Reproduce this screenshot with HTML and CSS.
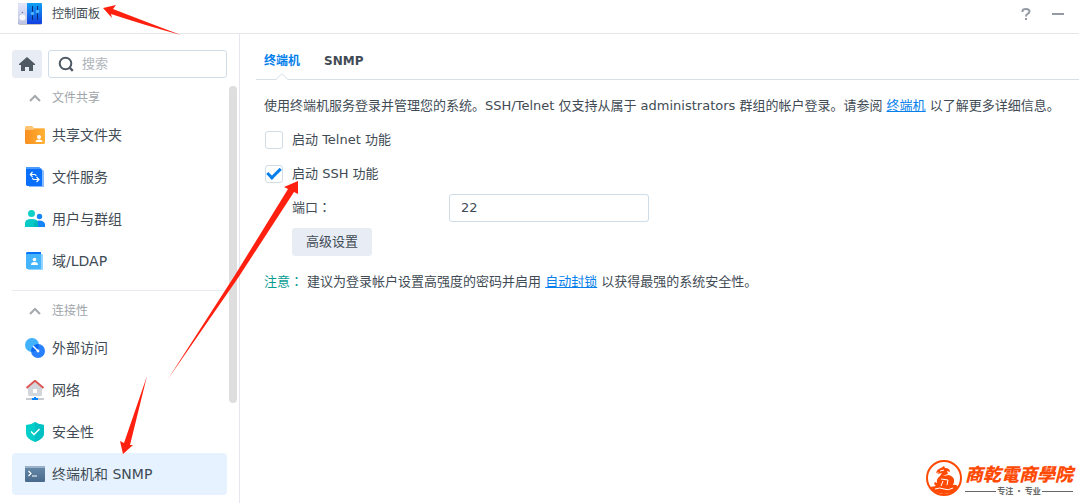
FILE: index.html
```html
<!DOCTYPE html>
<html lang="zh-CN">

<head>
  <meta charset="UTF-8">
  <meta name="viewport" content="width=device-width, initial-scale=1.0">
  <title>控制面板</title>
  <link rel="stylesheet" href="styles.css">
</head>

<body>
  <header class="titlebar">
    <svg class="app-icon" width="24" height="24" viewBox="0 0 24 24">
      <defs>
        <linearGradient id="panelBlue" x1="0" y1="0" x2="0" y2="1">
          <stop offset="0" stop-color="#10a0f5"/>
          <stop offset="1" stop-color="#1440e0"/>
        </linearGradient>
        <linearGradient id="panelGrey" x1="0" y1="0" x2="0" y2="1">
          <stop offset="0" stop-color="#e4e7fa"/>
          <stop offset="1" stop-color="#bcc2e2"/>
        </linearGradient>
      </defs>
      <rect x="0" y="3" width="24" height="20" rx="2" fill="#c4c4c8"/>
      <rect x="0" y="1" width="24" height="21" rx="1" fill="url(#panelBlue)"/>
      <path d="M1 1h8v21H1a1 1 0 0 1-1-1V2a1 1 0 0 1 1-1z" fill="url(#panelGrey)"/>
      <circle cx="4.500" cy="15.500" r="3" fill="#f8f8fc"/>
      <circle cx="4.500" cy="10.500" r=".7" fill="#6d7291"/>
      <path d="M14.500 4v14M19.500 4v14" stroke="#0a2c78" stroke-width="1"/>
      <circle cx="14.500" cy="11.500" r="1.700" fill="#4db4ff"/>
      <circle cx="19.500" cy="9.500" r="1.700" fill="#4db4ff"/>
    </svg>
    <h1 class="title">控制面板</h1>
    <div class="window-tools">
      <button type="button" class="tool-btn" aria-label="帮助">
        <svg width="16" height="16" viewBox="0 0 16 16" fill="none" stroke="#959ba3" stroke-width="2">
          <path d="M4.500 6V5Q4.500 3 8 3T11.500 5.500Q11.500 7 9.500 7.800Q8 8.500 8 10.500M8 12v2"/>
        </svg>
      </button>
      <button type="button" class="tool-btn" aria-label="最小化">
        <svg width="16" height="16" viewBox="0 0 16 16"><path d="M2 7h12v2H2z" fill="#959ba3"/></svg>
      </button>
    </div>
  </header>

  <div class="layout">
    <aside class="sidebar">
      <div class="search-row">
        <button type="button" class="home-btn" aria-label="主页">
          <svg width="16" height="16" viewBox="0 0 16 16">
            <path d="M8 1L0 8v1h2v6h4v-4h4v4h4V9h2V8z" fill="#505a64"/>
          </svg>
        </button>
        <label class="search">
          <svg width="16" height="16" viewBox="0 0 16 16" fill="none" stroke="#505a64" stroke-width="2">
            <circle cx="7.500" cy="7.500" r="5.800"/>
            <path d="M11.500 11.500l3.300 3.300" stroke-width="2.400"/>
          </svg>
          <input type="search" placeholder="搜索" aria-label="搜索">
        </label>
      </div>

      <nav class="menu">
        <button type="button" class="group-title">
          <svg width="12" height="8" viewBox="0 0 12 8" fill="none" stroke="#a4a8ad" stroke-width="2"><path d="M1 7l5-5 5 5"/></svg>
          文件共享
        </button>
        <a href="#share" class="menu-item">
          <svg width="20" height="20" viewBox="0 0 20 20">
            <defs>
              <linearGradient id="folder" x1="0" y1="0" x2="1" y2="0">
                <stop offset="0" stop-color="#f98f20"/>
                <stop offset="1" stop-color="#ffb234"/>
              </linearGradient>
            </defs>
            <path d="M1 1h6l2 2h10l1 1v7H0V2z" fill="#fec474"/>
            <path d="M0 5h8l2-1h9l1 1v13l-1 1H1l-1-1z" fill="url(#folder)"/>
            <circle cx="14" cy="12" r="2" fill="#fff"/>
            <path d="M10.500 17q0-2.500 3.500-2.500t3.500 2.500z" fill="#fff"/>
          </svg>
          共享文件夹
        </a>
        <a href="#file-service" class="menu-item">
          <svg width="20" height="20" viewBox="0 0 20 20">
            <path d="M4 0h10l5 4v16H4z" fill="#8abcfd"/>
            <path d="M1 0h12.500L17 3v16H2l-1-1z" fill="#0a70fb"/>
            <path d="M1 0h12.500L17 2H1z" fill="#499bff"/>
            <path d="M7.500 5L5.300 7.500 7.500 10M5.500 7.500h4q1.500 0 1.500 1.500M7.500 11q0 1.500 1.500 1.500h4.500M11.500 10l2.500 2.500-2.500 2.500" fill="none" stroke="#fff" stroke-width="1.200"/>
          </svg>
          文件服务
        </a>
        <a href="#users" class="menu-item">
          <svg width="20" height="20" viewBox="0 0 20 20">
            <circle cx="14.500" cy="7.500" r="2.700" fill="#1684fb"/>
            <path d="M10 18v-3q0-3.500 4.500-3.500T20 15v3z" fill="#1684fb"/>
            <circle cx="6.500" cy="4.500" r="3.500" fill="#10d0c5"/>
            <path d="M0 18v-4q0-4 6.500-4t6.500 4v4z" fill="#08c9c5"/>
            <path d="M9 18v-3q0-2 2.500-3.500Q13 13 13 14v4z" fill="#00b7ba"/>
          </svg>
          用户与群组
        </a>
        <a href="#domain" class="menu-item">
          <svg width="20" height="20" viewBox="0 0 20 20">
            <rect x="3" y="3" width="15" height="16" rx="1" fill="#91d4ff"/>
            <path d="M2 1h14v5H1V2z" fill="#0872f7"/>
            <path d="M1 3h15v15H2l-1-1z" fill="#45b4fc"/>
            <circle cx="9.500" cy="8.500" r="1.800" fill="#fff"/>
            <path d="M6 14q0-3 3.500-3t3.500 3z" fill="#fff"/>
          </svg>
          域/LDAP
        </a>

        <hr class="divider">

        <button type="button" class="group-title">
          <svg width="12" height="8" viewBox="0 0 12 8" fill="none" stroke="#a4a8ad" stroke-width="2"><path d="M1 7l5-5 5 5"/></svg>
          连接性
        </button>
        <a href="#external" class="menu-item">
          <svg width="20" height="20" viewBox="0 0 20 20">
            <circle cx="7" cy="7" r="7" fill="#43b2fd"/>
            <circle cx="13" cy="13" r="7" fill="#287fff"/>
            <path d="M6.200 13.800A7 7 0 0 1 13.800 6.200 7 7 0 0 1 6.200 13.800z" fill="#0869f1"/>
            <path d="M8 8l5 5" stroke="#fff" stroke-width="1.500"/>
            <circle cx="13" cy="13" r="1.400" fill="#fff"/>
          </svg>
          外部访问
        </a>
        <a href="#network" class="menu-item">
          <svg width="20" height="20" viewBox="0 0 20 20">
            <path d="M3 8l7-6 7 6v7l-1 1H4l-1-1z" fill="#d2d5da"/>
            <rect x="8" y="9" width="4" height="4" fill="#fff"/>
            <path d="M1.500 8L10 .800 18.500 8" fill="none" stroke="#d95454" stroke-width="2"/>
            <path d="M1 18h18v2H1z" fill="#c6cbd1"/>
            <path d="M9 17h2v1h2v2H7v-2h2z" fill="#0e83ff"/>
          </svg>
          网络
        </a>
        <a href="#security" class="menu-item">
          <svg width="20" height="20" viewBox="0 0 20 20">
            <path d="M10 0q4 3 9 3v8q0 6-9 9-9-3-9-9V3q5 0 9-3z" fill="#00cfc9"/>
            <path d="M10 0q4 3 9 3v8q0 6-9 9z" fill="#00c0c3"/>
            <path d="M6 9.500l3 3 5.500-5.500" fill="none" stroke="#fff" stroke-width="1.500"/>
          </svg>
          安全性
        </a>
        <a href="#terminal" class="menu-item active">
          <svg width="20" height="20" viewBox="0 0 20 20">
            <defs>
              <linearGradient id="term" x1="0" y1="0" x2="0" y2="1">
                <stop offset="0" stop-color="#688baa"/>
                <stop offset="1" stop-color="#48698b"/>
              </linearGradient>
            </defs>
            <rect y="2" width="20" height="16" rx="1" fill="url(#term)"/>
            <path d="M1 2h18l1 1v1H0V3z" fill="#9cb2c8"/>
            <path d="M3.500 7l2.500 2.500L3.500 12M7 12h5" fill="none" stroke="#fff" stroke-width="1.200"/>
          </svg>
          终端机和 SNMP
        </a>
      </nav>
      <div class="scroll-thumb"></div>
    </aside>

    <main class="content">
      <div class="tabs">
        <a href="#terminal" class="tab active">终端机
          <svg class="notch" width="12" height="7" viewBox="0 0 12 7"><path d="M0 6.500L6 .700l6 5.800V7H0z" fill="#fff"/><path d="M0 6.500L6 .700l6 5.800" fill="none" stroke="#d5e0e9"/></svg>
        </a>
        <a href="#snmp" class="tab">SNMP</a>
      </div>

      <form class="settings">
        <p class="row">使用终端机服务登录并管理您的系统。SSH/Telnet 仅支持从属于 administrators 群组的帐户登录。请参阅&nbsp;<a href="#help">终端机</a>&nbsp;以了解更多详细信息。</p>
        <div class="row">
          <input type="checkbox" id="telnet" class="check">
          <label for="telnet">启动 Telnet 功能</label>
        </div>
        <div class="row">
          <input type="checkbox" id="ssh" class="check" checked>
          <label for="ssh">启动 SSH 功能</label>
        </div>
        <div class="row indent">
          <label for="port" class="port-label">端口<span lang="zh-TW" class="colon">：</span></label>
          <input type="text" id="port" class="port" value="22">
        </div>
        <div class="row indent">
          <button type="button" class="btn">高级设置</button>
        </div>
        <p class="row note"><span class="note-label">注意<span lang="zh-TW" class="colon">：</span></span>建议为登录帐户设置高强度的密码并启用&nbsp;<a href="#autoblock">自动封锁</a>&nbsp;以获得最强的系统安全性。</p>
      </form>
    </main>
  </div>

  <!-- arrows pointing out the steps -->
  <svg class="arrows" width="320" height="470" viewBox="0 0 320 470" fill="#ff2010">
    <path d="M103 8l13-3-3 4q36 14 68 26-37-10-70-21l1 4z"/>
    <path d="M298 181l0 13-4-2L238 278 168 379 235 275 288 189l-4-2z"/>
    <path d="M147 376l-17 69 3 0-10 9-3-13 4 2z"/>
  </svg>

  <div class="brand">
    <svg width="38" height="38" viewBox="0 0 38 38">
      <circle cx="19" cy="19" r="17" fill="#fff" stroke="#ff4a05" stroke-width="2"/>
      <path d="M11 14q1-4 5-5l3-2 1 2q5 0 5 4l-3-1 1 3-3 1-2 1 6-1q6 2 5 7l-1 3q4-1 5 2-4 7-14 7T5 28l6-1q-3-2-1-4l2 1q-1-4 3-7l2-3-5 1 2-2z" fill="#ff4a05"/>
      <path d="M15 12l4-1M16 20l7 1-1 5M18 22l-2 5M10 30q5-2 9 0t9-1" fill="none" stroke="#fff"/>
    </svg>
    <div class="brand-text">
      <div class="brand-name">商乾電商學院</div>
      <div class="brand-sub">专注 · 专业</div>
    </div>
  </div>
</body>

</html>
```
FILE: styles.css
```css
* {
  margin: 0;
  padding: 0;
  box-sizing: border-box;
}

body {
  font-family: 'DejaVu Sans', 'Noto Sans CJK SC', sans-serif;
  font-size: 13px;
  line-height: 20px;
  color: #414b55;
  background: #fff;
  height: 100vh;
  overflow: hidden;
  display: flex;
  flex-direction: column;
}

svg {
  display: block;
  flex: none;
}

button,
input {
  font: inherit;
  color: inherit;
}

button {
  border: none;
  background: none;
  cursor: pointer;
}

a {
  color: #057feb;
}

.titlebar {
  display: flex;
  align-items: center;
  gap: 10px;
  height: 34px;
  padding: 0 13px 6px 18px;
  border-bottom: 1px solid #e4e6e9;
}

.title {
  font-size: 12px;
  font-weight: normal;
}

.window-tools {
  display: flex;
  gap: 16px;
  margin-left: auto;
}

.layout {
  display: flex;
  flex: 1;
  min-height: 0;
}

.sidebar {
  position: relative;
  width: 240px;
  flex: none;
  padding: 16px 12px 8px;
  border-right: 1px solid #e4e8ee;
}

.search-row {
  display: flex;
  gap: 6px;
  margin-bottom: 4px;
}

.home-btn {
  display: flex;
  align-items: center;
  justify-content: center;
  width: 30px;
  height: 28px;
  background: #e8edf5;
  border-radius: 3px;
}

.search {
  display: flex;
  flex: 1;
  align-items: center;
  gap: 8px;
  height: 28px;
  padding: 0 9px;
  border: 1px solid #d0dce6;
  border-radius: 3px;
}

.search input {
  width: 100%;
  border: none;
  outline: none;
  background: none;
}

.search input::placeholder {
  color: #b0b5bb;
}

.group-title {
  display: flex;
  align-items: center;
  gap: 11px;
  width: 100%;
  height: 32px;
  padding-left: 17px;
  font-size: 12px;
  color: #a0a5aa;
}

.menu-item {
  display: flex;
  align-items: center;
  gap: 7px;
  height: 42px;
  padding-left: 13px;
  border-radius: 4px;
  font-size: 14px;
  color: #414b55;
  text-decoration: none;
}

.menu-item.active {
  background: #e6f2ff;
}

.divider {
  margin: 8px 0 4px;
  border: none;
  border-top: 1px solid #e8ebf2;
}

.scroll-thumb {
  position: absolute;
  top: 52px;
  right: 2px;
  width: 8px;
  height: 317px;
  background: #dedede;
  border-radius: 4px;
}

.content {
  flex: 1;
  min-width: 0;
  padding: 8px 0 0 16px;
}

.tabs {
  display: flex;
  gap: 24px;
  height: 38px;
  padding-left: 8px;
  border-bottom: 1px solid #d5e0e9;
}

.tab {
  position: relative;
  line-height: 38px;
  font-size: 12px;
  font-weight: bold;
  color: #414b55;
  text-decoration: none;
}

.tab.active {
  color: #057feb;
}

.notch {
  position: absolute;
  left: 12px;
  bottom: -1px;
}

.settings {
  display: flex;
  flex-direction: column;
  gap: 6px;
  padding: 12px 8px;
}

.row {
  min-height: 28px;
  line-height: 28px;
}

div.row {
  display: flex;
  align-items: center;
  gap: 9px;
  height: 28px;
}

.check {
  appearance: none;
  width: 18px;
  height: 18px;
  margin-left: 1px;
  border: 1px solid #d0dce6;
  border-radius: 3px;
}

.check:checked::after {
  content: '';
  display: block;
  box-sizing: border-box;
  width: 14px;
  height: 8px;
  margin: 2px 1px;
  border: solid #057feb;
  border-width: 0 0 3px 3px;
  transform: rotate(-45deg);
}

div.indent {
  gap: 0;
  padding-left: 28px;
}

/* the TC face centres the full-width colon */
.colon {
  font-family: 'Noto Sans CJK TC', sans-serif;
  line-height: 20px;
}

.port-label {
  width: 157px;
}

.port {
  width: 200px;
  height: 28px;
  padding: 0 11px;
  border: 1px solid #d0dce6;
  border-radius: 3px;
}

.btn {
  height: 28px;
  padding: 0 14px;
  background: #e8edf5;
  border-radius: 3px;
}

.note {
  margin-top: 6px;
}

.note-label {
  margin-right: 4px;
  color: #0a9c94;
}

.arrows {
  position: absolute;
  top: 0;
  left: 0;
  pointer-events: none;
}

.brand {
  position: absolute;
  right: 6px;
  bottom: 6px;
  display: flex;
  align-items: center;
  gap: 2px;
}

.brand-name {
  font-family: 'Noto Sans CJK TC', sans-serif;
  font-size: 18px;
  line-height: 26px;
  font-weight: 900;
  font-style: italic;
  color: #ff4a05;
}

.brand-sub {
  display: flex;
  align-items: center;
  gap: 1px;
  font-family: 'Noto Sans CJK SC', sans-serif;
  font-size: 8px;
  line-height: 10px;
  font-weight: bold;
  color: #666;
}

.brand-sub::before,
.brand-sub::after {
  content: '';
  flex: 1;
  height: 1px;
  background: #666;
}
```
